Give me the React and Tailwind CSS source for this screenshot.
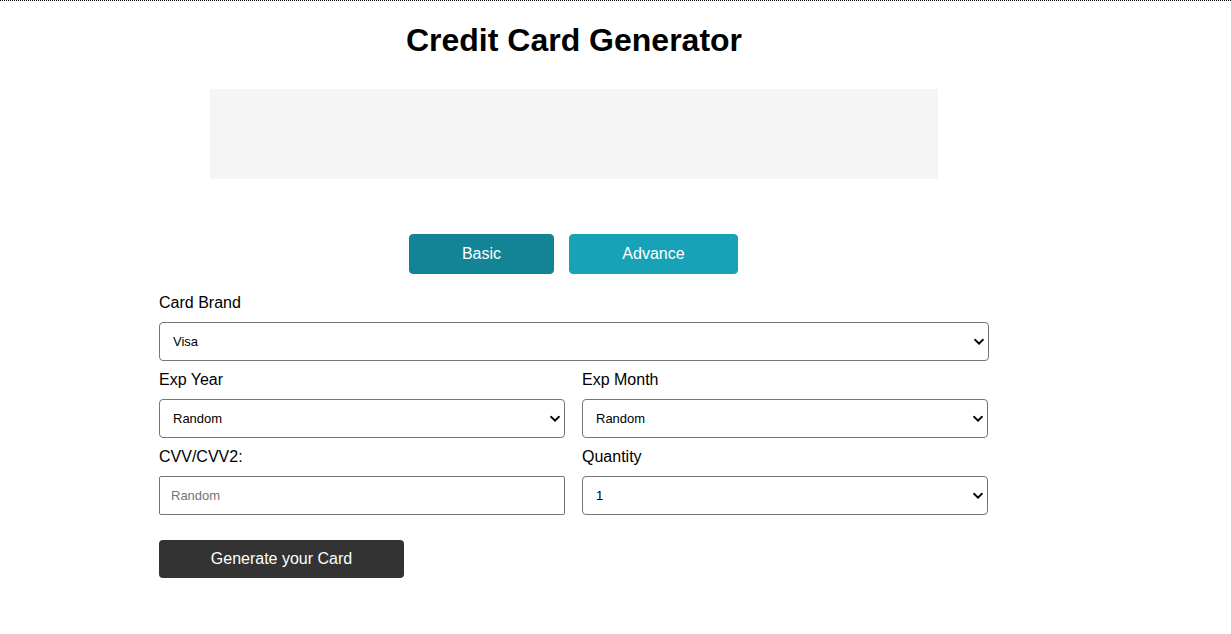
import React from "react";

const font = { fontFamily: '"Liberation Sans", Arial, sans-serif' };

function Chevron() {
  return (
    <svg className="pointer-events-none absolute right-[5px] top-1/2 -translate-y-1/2" width="10" height="7" viewBox="0 0 10 7">
      <path d="M1.2 1.4 L5 5.2 L8.8 1.4" fill="none" stroke="#000" strokeWidth="2" strokeLinecap="square" />
    </svg>
  );
}

function Select({ value, options }) {
  return (
    <div className="relative">
      <select
        defaultValue={value}
        className="block h-[39px] w-full appearance-none rounded-[4px] border border-[#767676] bg-white pl-[13px] pr-6 text-[13px] text-black outline-none"
        style={font}
      >
        {options.map((o) => (
          <option key={o}>{o}</option>
        ))}
      </select>
      <Chevron />
    </div>
  );
}

function Label({ children }) {
  return <label className="block h-[18px] text-[16px] leading-[18px] text-black">{children}</label>;
}

export default function App() {
  return (
    <div className="min-h-[634px] w-full border-t border-dotted border-black bg-white" style={font}>
      <div className="ml-[159px] w-[830px] pb-10">
        <h1 className="pt-[21px] text-center text-[32px] font-bold leading-[37px] text-black">Credit Card Generator</h1>
        <div className="mx-auto mt-[30px] h-[90px] w-[728px] bg-[#f5f5f5]" />
        <div className="ml-[250px] mt-[55px] flex gap-[15px]">
          <button className="h-[40px] w-[145px] rounded-[4px] border border-[#128091] bg-[#138496] text-[16px] text-white">Basic</button>
          <button className="h-[40px] w-[169px] rounded-[4px] border border-[#17a2b8] bg-[#17a2b8] text-[16px] text-white">Advance</button>
        </div>
        <div className="mt-[20px]">
          <Label>Card Brand</Label>
          <div className="mt-[10px]">
            <Select value="Visa" options={["Visa", "MasterCard", "American Express", "Discover", "JCB"]} />
          </div>
        </div>
        <div className="mt-[10px] grid grid-cols-[406px_406px] gap-x-[17px]">
          <div>
            <Label>Exp Year</Label>
            <div className="mt-[10px]">
              <Select value="Random" options={["Random", "2025", "2026", "2027", "2028"]} />
            </div>
          </div>
          <div>
            <Label>Exp Month</Label>
            <div className="mt-[10px]">
              <Select value="Random" options={["Random", "01", "02", "03", "04"]} />
            </div>
          </div>
          <div className="mt-[10px]">
            <Label>CVV/CVV2:</Label>
            <div className="mt-[10px]">
              <input
                placeholder="Random"
                className="block h-[39px] w-full rounded-[2px] border border-[#767676] bg-white px-[11px] text-[13px] text-black outline-none placeholder:text-[#757575]"
                style={font}
              />
            </div>
          </div>
          <div className="mt-[10px]">
            <Label>Quantity</Label>
            <div className="mt-[10px]">
              <Select value="1" options={["1", "5", "10", "20"]} />
            </div>
          </div>
        </div>
        <button className="mt-[25px] h-[38px] w-[245px] rounded-[4px] bg-[#333333] text-[16px] text-white">Generate your Card</button>
      </div>
    </div>
  );
}
